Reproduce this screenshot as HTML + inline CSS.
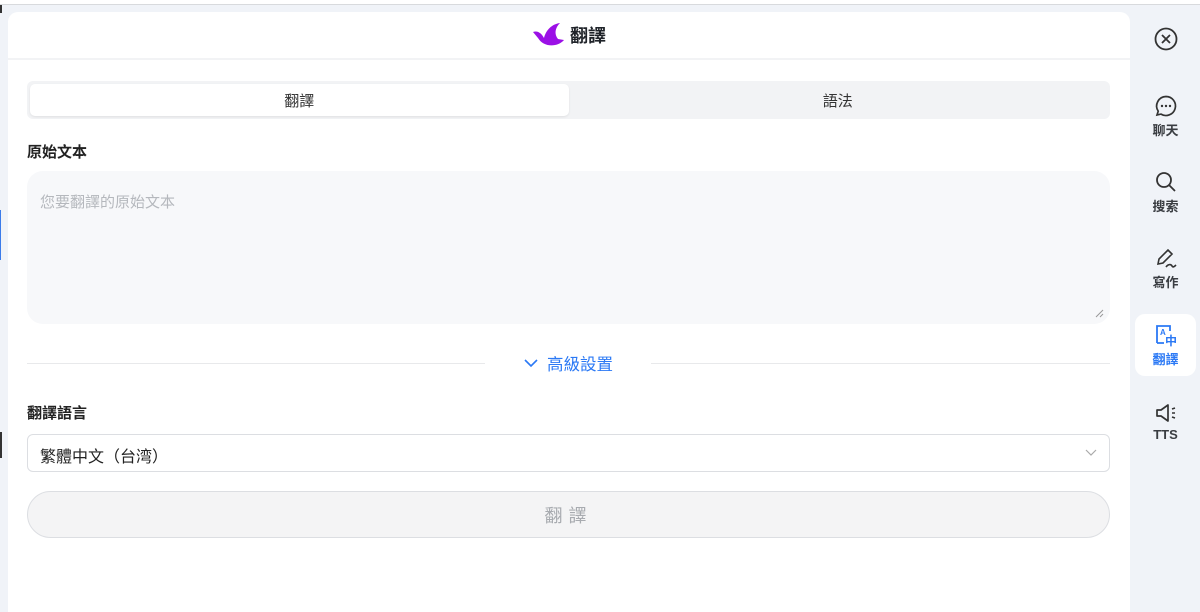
<!DOCTYPE html>
<html><head><meta charset="utf-8"><style>
*{box-sizing:border-box;margin:0;padding:0}
body{width:1200px;height:609px;overflow:hidden;background:#f0f3f8;font-family:"Liberation Sans","Noto Sans CJK TC",sans-serif;position:relative;color:#1f2329}
.topline{position:absolute;left:0;top:0;width:1200px;height:5px;background:#fff;border-bottom:1px solid #d8dadd}
.lbar{position:absolute;left:0;width:2px;background:#333}
.panel{position:absolute;left:8px;top:12px;width:1122px;height:600px;background:#fff;border-radius:10px 10px 0 0}
.hdr{height:48px;border-bottom:2px solid #f2f3f5;display:flex;align-items:center;justify-content:center;font-size:18px;font-weight:bold;gap:4px}
.tabs{position:absolute;left:19px;top:69px;width:1083px;height:38px;background:#f2f3f5;border-radius:6px;display:flex;padding:3px}
.tab{flex:1;display:flex;align-items:center;justify-content:center;font-size:15px;color:#333}
.tab.on{background:#fff;border-radius:5px;box-shadow:0 1px 2px rgba(0,0,0,.08)}
.lbl{position:absolute;left:19px;font-size:15px;font-weight:bold;color:#222}
.ta{position:absolute;left:19px;top:159px;width:1083px;height:153px;background:#f7f8fa;border-radius:16px;padding:20px 13px;color:#b5b8bd;font-size:15px}
.hr{position:absolute;top:351px;height:1px;background:#e8e9eb}
.adv{position:absolute;left:516px;top:339px;color:#2b79f5;font-size:16.5px;display:flex;align-items:center;gap:9px}
.sel{position:absolute;left:19px;top:422px;width:1083px;height:38px;border:1px solid #dcdee2;border-radius:6px;font-size:16px;padding:8px 12px;color:#222}
.btn{position:absolute;left:19px;top:479px;width:1083px;height:47px;background:#f4f4f5;border:1px solid #dcdee2;border-radius:24px;display:flex;align-items:center;justify-content:center;color:#a8abb0;font-size:18px;letter-spacing:6px}
.side{position:absolute;left:1130px;top:5px;width:70px;height:604px}
.it{position:absolute;left:5px;width:61px;height:62px;display:flex;flex-direction:column;align-items:center;justify-content:center;font-size:13px;font-weight:bold;color:#3a3d42;gap:2px}
</style></head><body>
<div class="topline"></div>
<div class="lbar" style="top:5px;height:8px"></div>
<div class="lbar" style="top:210px;height:50px;background:#3b7bea;width:1px"></div>
<div class="lbar" style="top:432px;height:26px"></div>
<div class="panel">
 <div class="hdr"><svg width="34" height="26" viewBox="0 0 34 26"><path d="M1 10 C6 8 10 12 12 16 C14 8 20 2 28 1 C23 6 22 12 26 17 L32 18 C26 25 12 26 6 16 Z" fill="#9b10e6"/></svg><span>翻譯</span></div>
 <div class="tabs"><div class="tab on">翻譯</div><div class="tab">語法</div></div>
 <div class="lbl" style="top:129px">原始文本</div>
 <div class="ta">您要翻譯的原始文本
  <svg style="position:absolute;right:6px;bottom:6px" width="10" height="10"><path d="M9 2L2 9M9 6L6 9" stroke="#999" stroke-width="1"/></svg></div>
 <div class="hr" style="left:19px;width:458px"></div>
 <div class="hr" style="left:643px;width:459px"></div>
 <div class="adv"><svg width="14" height="10"><path d="M1 2l6 6 6-6" stroke="#2b79f5" stroke-width="1.6" fill="none"/></svg>高級設置</div>
 <div class="lbl" style="top:390px">翻譯語言</div>
 <div class="sel">繁體中文（台湾）<svg style="position:absolute;right:12px;top:14px" width="12" height="8"><path d="M1 1l5 5 5-5" stroke="#aaa" stroke-width="1.2" fill="none"/></svg></div>
 <div class="btn">翻譯</div>
</div>
<div class="side">
 <div class="it" style="top:3px"><svg width="26" height="26" viewBox="0 0 26 26"><circle cx="13" cy="13" r="10.5" stroke="#333" stroke-width="1.8" fill="none"/><path d="M9 9l8 8M17 9l-8 8" stroke="#333" stroke-width="1.8"/></svg></div>
 <div class="it" style="top:80px"><svg width="24" height="24" viewBox="0 0 24 24"><path d="M12 2.5a9.5 9.5 0 1 1-5 17.6L3 21l1.2-3.8A9.5 9.5 0 0 1 12 2.5z" stroke="#333" stroke-width="1.7" fill="none"/><circle cx="8" cy="12" r="1.2" fill="#333"/><circle cx="12" cy="12" r="1.2" fill="#333"/><circle cx="16" cy="12" r="1.2" fill="#333"/></svg>聊天</div>
 <div class="it" style="top:156px"><svg width="24" height="24" viewBox="0 0 24 24"><circle cx="10" cy="10" r="7" stroke="#333" stroke-width="1.8" fill="none"/><path d="M15 15l6 6" stroke="#333" stroke-width="1.8"/></svg>搜索</div>
 <div class="it" style="top:232px"><svg width="24" height="24" viewBox="0 0 24 24"><path d="M4 18l1-5 9-9 4 4-9 9zM12 21c2-3 5-3 6-1s3 0 4-1" stroke="#333" stroke-width="1.6" fill="none"/></svg>寫作</div>
 <div class="it" style="top:309px;background:#fff;border-radius:10px;color:#2b79f5"><svg width="24" height="24" viewBox="0 0 24 24"><path d="M3 20V3h13v5M3 20h7" stroke="#2b79f5" stroke-width="1.8" fill="none"/><text x="6" y="12" font-size="8" fill="#2b79f5" font-family="Liberation Sans">A</text><text x="11" y="22" font-size="12" font-weight="bold" fill="#2b79f5" font-family="Noto Sans CJK TC">中</text></svg>翻譯</div>
 <div class="it" style="top:385px"><svg width="24" height="24" viewBox="0 0 24 24"><path d="M3 9h4l7-5v16l-7-5H3z" stroke="#333" stroke-width="1.7" fill="none" stroke-linejoin="round"/><path d="M18 8l3-1M18 12h3M18 16l3 1" stroke="#333" stroke-width="1.6"/></svg>TTS</div>
</div>
</body></html>
